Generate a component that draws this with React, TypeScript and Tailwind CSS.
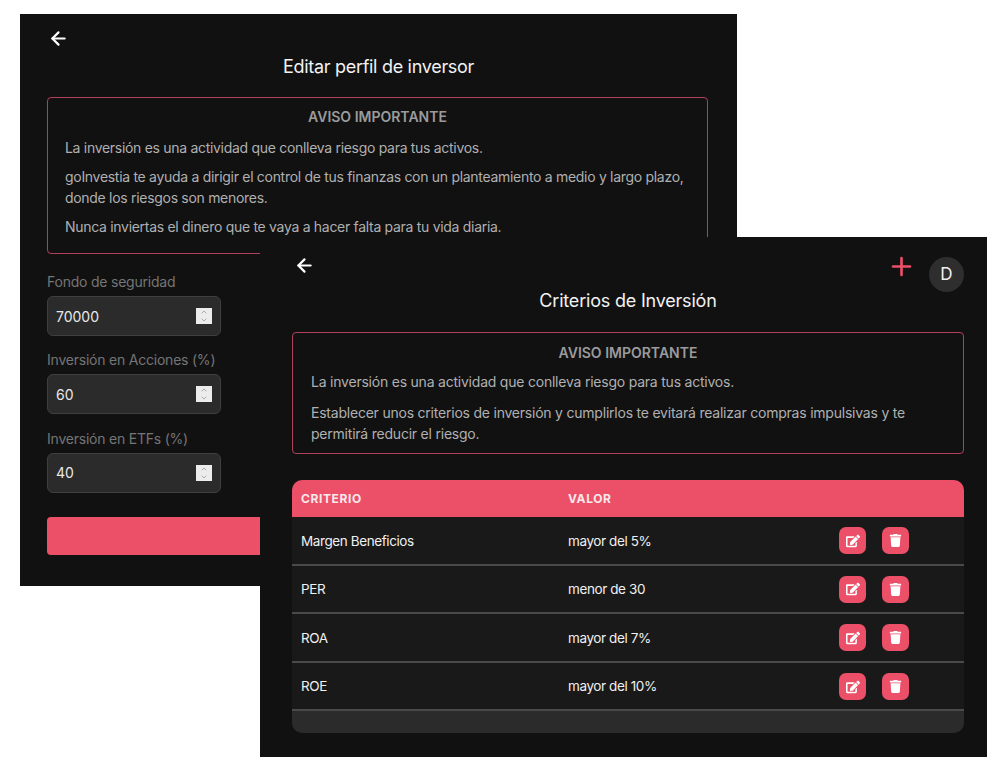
import { ArrowLeft, ChevronDown, ChevronUp, Plus } from "lucide-react";
import { FaEdit, FaTrash } from "react-icons/fa";

const rows = [
  { criterio: "Margen Beneficios", valor: "mayor del 5%" },
  { criterio: "PER", valor: "menor de 30" },
  { criterio: "ROA", valor: "mayor del 7%" },
  { criterio: "ROE", valor: "mayor del 10%" },
];

const fields = [
  { label: "Fondo de seguridad", value: "70000" },
  { label: "Inversión en Acciones (%)", value: "60" },
  { label: "Inversión en ETFs (%)", value: "40" },
];

function NumberField({ label, value }: { label: string; value: string }) {
  return (
    <div className="mb-[14.3px]">
      <div className="h-[20px] text-[14px] leading-[20px] tracking-[-0.22px] text-[#757575]">{label}</div>
      <div className="mt-[4px] flex h-[40px] w-[174px] items-center justify-between rounded-[6px] border border-[#3f3f3f] bg-[#2b2b2b] pl-[8px] pr-[8px] text-[14px] text-[#e8e8e8]">
        <span>{value}</span>
        <span className="flex h-[16px] w-[16px] flex-col items-center justify-center bg-[#ececec] text-[#8a8a8a]">
          <ChevronUp size={8} strokeWidth={2} />
          <ChevronDown size={8} strokeWidth={2} />
        </span>
      </div>
    </div>
  );
}

function ProfileWindow() {
  return (
    <div className="absolute left-[20px] top-[14px] h-[572px] w-[717px] bg-[#111112] px-[27px]">
      <ArrowLeft className="ml-[1px] mt-[14px] text-white" size={21} strokeWidth={2.5} />
      <h2 className="mt-[2px] h-[32px] text-center text-[18px] leading-[32px] tracking-[-0.3px] text-[#f2f2f2]">
        Editar perfil de inversor
      </h2>
      <div className="mt-[14px] h-[157px] w-[661px] rounded-[4px] border border-[#b0405a] px-[17px] pt-[9px] text-[14px] leading-[20px] tracking-[-0.3px] text-[#b0b0b0]">
        <div className="text-center font-semibold tracking-normal text-[#9b9b9b]">AVISO IMPORTANTE</div>
        <p className="mt-[11px]">La inversión es una actividad que conlleva riesgo para tus activos.</p>
        <p className="mt-[8px] leading-[21px]">
          goInvestia te ayuda a dirigir el control de tus finanzas con un planteamiento a medio y largo plazo,
          donde los riesgos son menores.
        </p>
        <p className="mt-[9px]">Nunca inviertas el dinero que te vaya a hacer falta para tu vida diaria.</p>
      </div>
      <div className="mt-[18px]">
        {fields.map((f) => (
          <NumberField key={f.label} label={f.label} value={f.value} />
        ))}
      </div>
      <div className="mt-[24.4px] h-[38px] w-[661px] rounded-[4px] bg-[#ec5068]" />
    </div>
  );
}

function CriteriaWindow() {
  return (
    <div className="absolute left-[260px] top-[237px] h-[520px] w-[727px] bg-[#111112] pl-[32px] pr-[23px]">
      <div className="flex h-[54px] items-start justify-between">
        <ArrowLeft className="ml-[2px] mt-[18px] text-white" size={21} strokeWidth={2.5} />
        <div className="mt-[20px] flex items-start gap-[13px]">
          <Plus className="mt-[-5.5px] text-[#ec5068]" size={29} strokeWidth={2.2} />
          <div className="flex h-[35px] w-[35px] items-center justify-center rounded-full bg-[#2e2e2e] text-[17px] text-[#f2f2f2]">
            D
          </div>
        </div>
      </div>
      <h2 className="h-[20px] text-center text-[18px] leading-[20px] tracking-[-0.2px] text-[#f2f2f2]">
        Criterios de Inversión
      </h2>
      <div className="mt-[21px] h-[122px] rounded-[4px] border border-[#b0405a] px-[18px] pt-[10px] text-[14px] leading-[20px] tracking-[-0.22px] text-[#b0b0b0]">
        <div className="text-center font-semibold tracking-normal text-[#9b9b9b]">AVISO IMPORTANTE</div>
        <p className="mt-[9px]">La inversión es una actividad que conlleva riesgo para tus activos.</p>
        <p className="mt-[10px] leading-[21px]">
          Establecer unos criterios de inversión y cumplirlos te evitará realizar compras impulsivas y te permitirá
          reducir el riesgo.
        </p>
      </div>
      <div className="mt-[26px] overflow-hidden rounded-[10px] bg-[#191919]">
        <div className="flex h-[37px] items-center bg-[#ec5068] text-[12px] font-bold tracking-[0.6px] text-[#f7e9ec]">
          <div className="w-[276px] pl-[9px]">CRITERIO</div>
          <div>VALOR</div>
        </div>
        {rows.map((r) => (
          <div
            key={r.criterio}
            className="flex h-[48.6px] items-center border-b-2 border-[#4a4a4a] pt-[1px] text-[13.5px] tracking-[-0.4px] text-[#f0f0f0]"
          >
            <div className="w-[276px] pl-[9px]">{r.criterio}</div>
            <div className="w-[271px]">{r.valor}</div>
            <div className="flex gap-[16px]">
              <button className="flex h-[27px] w-[27px] items-center justify-center rounded-[7px] bg-[#ec5068] text-white">
                <FaEdit size={14} />
              </button>
              <button className="flex h-[27px] w-[27px] items-center justify-center rounded-[7px] bg-[#ec5068] text-white">
                <FaTrash size={13} />
              </button>
            </div>
          </div>
        ))}
        <div className="h-[22px] bg-[#2b2b2b]" />
      </div>
    </div>
  );
}

export default function App() {
  return (
    <div className="relative h-[776px] w-[1000px] overflow-hidden bg-white font-['Inter',sans-serif]">
      <ProfileWindow />
      <CriteriaWindow />
    </div>
  );
}
